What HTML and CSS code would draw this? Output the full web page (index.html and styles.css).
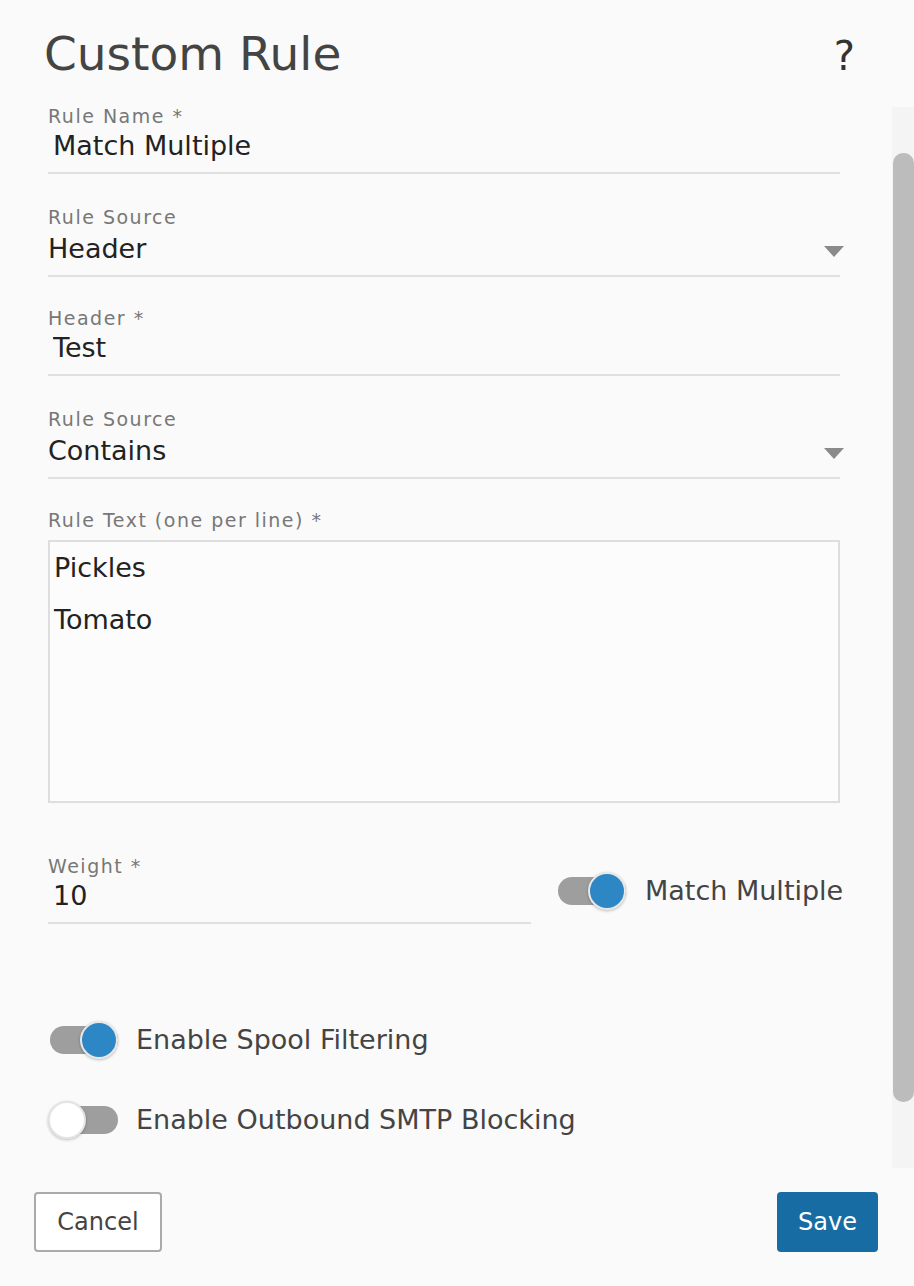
FILE: index.html
```html
<!DOCTYPE html>
<html lang="en">
<head>
<meta charset="utf-8">
<title>Custom Rule</title>
<link rel="stylesheet" href="styles.css">
</head>
<body>
<div class="dialog">
  <header class="header">
    <h1 class="title">Custom Rule</h1>
    <span class="help">?</span>
  </header>
  <div class="content">
    <form class="form">
      <div class="field">
        <label class="label">Rule Name *</label>
        <input class="value input" type="text" value="Match Multiple">
      </div>
      <div class="field select-field">
        <label class="label">Rule Source</label>
        <div class="value select">Header</div>
        <span class="arrow"></span>
      </div>
      <div class="field">
        <label class="label">Header *</label>
        <input class="value input" type="text" value="Test">
      </div>
      <div class="field select-field">
        <label class="label">Rule Source</label>
        <div class="value select">Contains</div>
        <span class="arrow"></span>
      </div>
      <div class="area-group">
        <label class="label area-label">Rule Text (one per line) *</label>
        <textarea class="area">Pickles
Tomato</textarea>
      </div>
      <div class="weight-row">
        <div class="field weight">
          <label class="label">Weight *</label>
          <input class="value input" type="text" value="10">
        </div>
        <div class="toggle-item match">
          <span class="toggle on"><span class="track"></span><span class="thumb"></span></span>
          <span class="toggle-text">Match Multiple</span>
        </div>
      </div>
      <div class="toggle-item spool">
        <span class="toggle on"><span class="track"></span><span class="thumb"></span></span>
        <span class="toggle-text">Enable Spool Filtering</span>
      </div>
      <div class="toggle-item outbound">
        <span class="toggle"><span class="track"></span><span class="thumb"></span></span>
        <span class="toggle-text">Enable Outbound SMTP Blocking</span>
      </div>
    </form>
    <div class="scroll-track"><div class="scroll-thumb"></div></div>
  </div>
  <footer class="actions">
    <button class="btn cancel" type="button">Cancel</button>
    <button class="btn save" type="button">Save</button>
  </footer>
</div>
</body>
</html>
```
FILE: styles.css
```css
html, body {
  margin: 0;
  padding: 0;
  background: #fafafa;
}
body {
  font-family: "DejaVu Sans", "Liberation Sans", sans-serif;
  color: #222;
}
.dialog {
  width: 914px;
  height: 1286px;
  display: flex;
  flex-direction: column;
  overflow: hidden;
}
.header {
  display: flex;
  align-items: baseline;
  justify-content: space-between;
  padding: 27px 0 0 44px;
  height: 54px;
}
.title {
  margin: 0;
  font-size: 47px;
  line-height: 54px;
  font-weight: normal;
  color: #444;
}
.help {
  font-size: 40px;
  line-height: 54px;
  color: #333;
  margin-right: 59px;
}
.content {
  display: flex;
  height: 1087px;
}
.form {
  width: 792px;
  flex: none;
  margin: 0;
  padding: 24px 0 0 48px;
  display: flex;
  flex-direction: column;
}
.field {
  position: relative;
  display: flex;
  flex-direction: column;
  border-bottom: 2px solid #e0e0e0;
  padding-bottom: 10px;
  margin-bottom: 32px;
}
.select-field {
  margin-bottom: 30px;
}
.label {
  font-size: 19px;
  line-height: 22px;
  letter-spacing: 1.5px;
  color: #777;
  margin-bottom: 3px;
}
.value {
  font-family: "DejaVu Sans", "Liberation Sans", sans-serif;
  font-size: 27px;
  line-height: 32px;
  height: 32px;
  color: #222;
}
.input {
  border: none;
  outline: none;
  background: transparent;
  padding: 0 0 0 5px;
  margin: 0;
  width: 100%;
  box-sizing: border-box;
}
.select {
  padding: 2px 0 0 0;
}
.arrow {
  position: absolute;
  right: -4px;
  top: 40px;
  width: 0;
  height: 0;
  border-left: 10.5px solid transparent;
  border-right: 10.5px solid transparent;
  border-top: 11px solid #8a8a8a;
}
.area-group {
  display: flex;
  flex-direction: column;
}
.area-label {
  margin-bottom: 9px;
}
.area {
  box-sizing: border-box;
  width: 792px;
  height: 262.5px;
  margin: 0;
  border: 2px solid #dedede;
  background: #fcfcfc;
  padding: 0 4px;
  resize: none;
  outline: none;
  font-family: "DejaVu Sans", "Liberation Sans", sans-serif;
  font-size: 27px;
  line-height: 52px;
  color: #222;
  overflow: hidden;
}
.weight-row {
  display: flex;
  align-items: center;
  gap: 25px;
  margin-top: 52px;
}
.weight {
  width: 483px;
  flex: none;
  box-sizing: border-box;
  margin-bottom: 0;
}
.toggle-item {
  display: flex;
  align-items: center;
  gap: 18px;
  flex: none;
}
.match {
  margin-top: 3px;
  gap: 19px;
}
.spool {
  margin-top: 97px;
}
.outbound {
  margin-top: 42px;
}
.toggle {
  position: relative;
  display: block;
  width: 70px;
  height: 38px;
  flex: none;
}
.track {
  position: absolute;
  left: 2px;
  top: 5px;
  width: 68px;
  height: 28px;
  border-radius: 14px;
  background: #9e9e9e;
}
.thumb {
  position: absolute;
  left: 0;
  top: 0;
  width: 38px;
  height: 38px;
  box-sizing: border-box;
  border-radius: 50%;
  background: #fff;
  border: 2px solid #e4e4e4;
  box-shadow: 0 1px 3px rgba(0, 0, 0, 0.25);
}
.toggle.on .thumb {
  left: 32px;
  background: #2d87c4;
  border-color: #e8e8e8;
}
.toggle-text {
  font-size: 27px;
  line-height: 34px;
  color: #444;
  white-space: nowrap;
}
.scroll-track {
  margin-left: auto;
  margin-top: 26px;
  width: 22px;
  height: 1061px;
  background: #f4f4f4;
  position: relative;
}
.scroll-thumb {
  position: absolute;
  left: 1px;
  right: 0;
  top: 46px;
  height: 949px;
  background: #bcbcbc;
  border-radius: 10px;
}
.actions {
  display: flex;
  justify-content: space-between;
  align-items: flex-start;
  padding: 24px 36px 0 34px;
}
.btn {
  height: 60px;
  font-family: "DejaVu Sans", "Liberation Sans", sans-serif;
  font-size: 24px;
  border-radius: 4px;
  cursor: pointer;
}
.cancel {
  width: 128px;
  background: #fff;
  color: #444;
  border: 2px solid #aaa;
}
.save {
  width: 101px;
  background: #186ca4;
  color: #fff;
  border: none;
}
```
